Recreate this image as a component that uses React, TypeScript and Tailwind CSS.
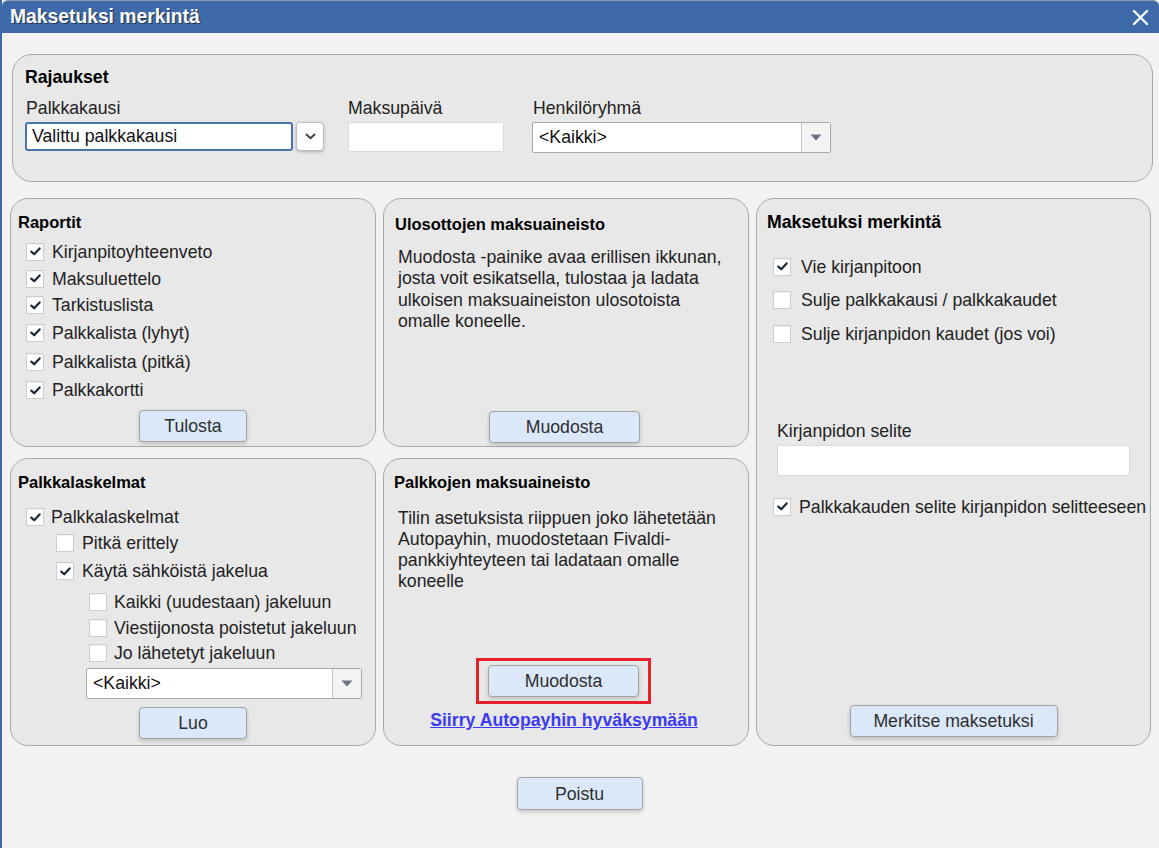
import React from "react";

function Check({ checked }: { checked?: boolean }) {
  return (
    <span className="flex h-[18px] w-[18px] shrink-0 items-center justify-center border border-[#cdcdcd] bg-white shadow-[inset_0_1px_1px_rgba(0,0,0,0.06)]">
      {checked && (
        <svg width="11" height="9" viewBox="0 0 11 9">
          <path d="M1.3 4.6 L4.2 7.3 L9.6 1.4" fill="none" stroke="#1f2a36" strokeWidth="2.2" strokeLinecap="round" strokeLinejoin="round" />
        </svg>
      )}
    </span>
  );
}

function CheckRow({ checked, label, className = "" }: { checked?: boolean; label: string; className?: string }) {
  return (
    <div className={`flex items-center ${className}`}>
      <Check checked={checked} />
      <span className="whitespace-nowrap text-[17.7px] leading-[20px] text-[#222]">{label}</span>
    </div>
  );
}

function Btn({ children, className = "" }: { children: React.ReactNode; className?: string }) {
  return (
    <button className={`h-[32px] rounded-[4px] border border-[#a3a3a3] bg-[#dbe8f9] text-[17.7px] leading-[20px] text-[#2f2f2f] shadow-[0_2px_4px_rgba(0,0,0,0.18)] ${className}`}>
      {children}
    </button>
  );
}

function Panel({
  title,
  children,
  className = "",
  titleClass = "text-[16.5px]",
}: {
  title: string;
  children?: React.ReactNode;
  className?: string;
  titleClass?: string;
}) {
  return (
    <div className={`flex flex-col rounded-[18px] border border-[#a9a9a9] bg-[#e8e8e8] ${className}`}>
      <div className={`font-bold leading-[20px] text-black ${titleClass}`}>{title}</div>
      {children}
    </div>
  );
}

function SelectBox({ value, className = "" }: { value: string; className?: string }) {
  return (
    <div className={`flex h-[31px] items-stretch rounded-[2px] border border-[#a9a9a9] bg-white ${className}`}>
      <div className="flex flex-1 items-center pl-[6px] text-[17.7px] text-[#111]">{value}</div>
      <div className="flex w-[29px] items-center justify-center border-l border-[#c4c4c4] bg-[#f3f3f3]">
        <svg width="12" height="7" viewBox="0 0 12 7">
          <path d="M0.5 0.5 H11.5 L6 6.5 Z" fill="#6c7483" />
        </svg>
      </div>
    </div>
  );
}

export default function App() {
  return (
    <div className="h-[848px] w-[1159px] overflow-hidden border-l-[2px] border-[#3e6aa9] bg-[#f2f2f2] font-['Liberation_Sans',Arial,sans-serif] text-[#222]">
      {/* title bar */}
      <div className="flex h-[33px] items-center justify-between rounded-t-[6px] border-t border-[#8d9bb0] bg-[#3e6aa9] pl-[8px] pr-[10px]">
        <span className="text-[19.3px] font-bold text-white [text-shadow:1px_1px_1px_rgba(0,0,0,0.55)]">Maksetuksi merkintä</span>
        <svg width="17" height="17" viewBox="0 0 17 17">
          <path d="M2 2 L15 15 M15 2 L2 15" stroke="white" strokeWidth="2.4" strokeLinecap="round" />
        </svg>
      </div>

      <div className="pl-[8px] pr-[6px] pt-[21px]">
        {/* filters */}
        <div className="ml-[2px] h-[128px] rounded-[20px] border border-[#a9a9a9] bg-[#e8e8e8] px-[12px] pt-[12px]">
          <div className="text-[17.7px] font-bold leading-[20px] text-black">Rajaukset</div>
          <div className="mt-[11px] flex">
            <div className="flex flex-col">
              <div className="pl-[1px] text-[17.7px] leading-[20px] text-[#222]">Palkkakausi</div>
              <div className="mt-[4px] flex gap-[3px]">
                <div className="flex h-[29px] w-[268px] items-center rounded-[3px] border-2 border-[#4a72ad] bg-white pl-[5px] text-[17.7px] text-[#111]">
                  Valittu palkkakausi
                </div>
                <div className="flex h-[29px] w-[28px] items-center justify-center rounded-[4px] border border-[#bdbdbd] bg-white shadow-[0_1px_3px_rgba(0,0,0,0.25)]">
                  <svg width="11" height="7" viewBox="0 0 11 7">
                    <path d="M1.5 1.5 L5.5 5.3 L9.5 1.5" fill="none" stroke="#444" strokeWidth="2" strokeLinecap="round" strokeLinejoin="round" />
                  </svg>
                </div>
              </div>
            </div>
            <div className="ml-[24px] flex flex-col">
              <div className="text-[17.7px] leading-[20px] text-[#222]">Maksupäivä</div>
              <div className="mt-[4px] h-[30px] w-[156px] rounded-[2px] border border-[#dadada] bg-white" />
            </div>
            <div className="ml-[28px] flex flex-col">
              <div className="pl-[1px] text-[17.7px] leading-[20px] text-[#222]">Henkilöryhmä</div>
              <SelectBox value="<Kaikki>" className="mt-[4px] w-[299px]" />
            </div>
          </div>
        </div>

        {/* panels */}
        <div className="mt-[16px] grid grid-cols-[366px_366px_395px] grid-rows-[249px_288px] gap-x-[7px] gap-y-[11px]">
          <Panel title="Raportit" className="pl-[7px] pt-[13px]">
            <div className="ml-[8px] mt-[6px] flex flex-col">
              <CheckRow checked label="Kirjanpitoyhteenveto" className="h-[27px] gap-[8px]" />
              <CheckRow checked label="Maksuluettelo" className="h-[27px] gap-[8px]" />
              <CheckRow checked label="Tarkistuslista" className="h-[26px] gap-[8px]" />
              <CheckRow checked label="Palkkalista (lyhyt)" className="h-[29px] gap-[8px]" />
              <CheckRow checked label="Palkkalista (pitkä)" className="h-[29px] gap-[8px]" />
              <CheckRow checked label="Palkkakortti" className="h-[28px] gap-[8px]" />
            </div>
            <div className="mt-[6px] flex justify-center pr-[7px]">
              <Btn className="w-[108px]">Tulosta</Btn>
            </div>
          </Panel>

          <Panel title="Ulosottojen maksuaineisto" className="pl-[11px] pt-[15px]">
            <p className="mt-[13px] pl-[3px] text-[17.7px] leading-[21.3px] text-[#222]">
              Muodosta -painike avaa erillisen ikkunan,
              <br />
              josta voit esikatsella, tulostaa ja ladata
              <br />
              ulkoisen maksuaineiston ulosotoista
              <br />
              omalle koneelle.
            </p>
            <div className="mt-[79px] flex justify-center pr-[14px]">
              <Btn className="w-[151px]">Muodosta</Btn>
            </div>
          </Panel>

          <Panel title="Maksetuksi merkintä" titleClass="text-[17.7px]" className="row-span-2 pl-[10px] pt-[13px]">
            <div className="ml-[6px] mt-[18px] flex flex-col">
              <CheckRow checked label="Vie kirjanpitoon" className="h-[33.5px] gap-[10px]" />
              <CheckRow label="Sulje palkkakausi / palkkakaudet" className="h-[33.5px] gap-[10px]" />
              <CheckRow label="Sulje kirjanpidon kaudet (jos voi)" className="h-[33.5px] gap-[10px]" />
            </div>
            <div className="ml-[10px] mt-[70px] text-[17.7px] leading-[20px] text-[#222]">Kirjanpidon selite</div>
            <div className="ml-[10px] mt-[4px] h-[31px] w-[353px] rounded-[2px] border border-[#dadada] bg-white" />
            <CheckRow checked label="Palkkakauden selite kirjanpidon selitteeseen" className="ml-[6px] mt-[21px] gap-[8px]" />
            <div className="mt-auto mb-[8px] flex justify-center pr-[10px]">
              <Btn className="w-[208px]">Merkitse maksetuksi</Btn>
            </div>
          </Panel>

          <Panel title="Palkkalaskelmat" className="pl-[7px] pt-[13px]">
            <div className="ml-[8px] mt-[12px] flex flex-col">
              <CheckRow checked label="Palkkalaskelmat" className="h-[26px] gap-[7px]" />
              <div className="ml-[30px] flex flex-col">
                <CheckRow label="Pitkä erittely" className="h-[26px] gap-[8px]" />
                <CheckRow checked label="Käytä sähköistä jakelua" className="h-[30px] gap-[8px]" />
                <div className="ml-[33px] mt-[3px] flex flex-col">
                  <CheckRow label="Kaikki (uudestaan) jakeluun" className="h-[26px] gap-[7px]" />
                  <CheckRow label="Viestijonosta poistetut jakeluun" className="h-[25px] gap-[7px]" />
                  <CheckRow label="Jo lähetetyt jakeluun" className="h-[26px] gap-[7px]" />
                </div>
              </div>
            </div>
            <SelectBox value="<Kaikki>" className="ml-[68px] mt-[2px] w-[276px]" />
            <div className="mt-[8px] flex justify-center pr-[7px]">
              <Btn className="w-[108px]">Luo</Btn>
            </div>
          </Panel>

          <Panel title="Palkkojen maksuaineisto" className="pl-[10px] pt-[13px]">
            <p className="mt-[16px] pl-[4px] text-[17.7px] leading-[21px] text-[#222]">
              Tilin asetuksista riippuen joko lähetetään
              <br />
              Autopayhin, muodostetaan Fivaldi-
              <br />
              pankkiyhteyteen tai ladataan omalle
              <br />
              koneelle
            </p>
            <div className="mt-[66px] flex justify-center pr-[15px]">
              <div className="flex h-[46px] w-[175px] items-center justify-center border-[3px] border-[#e5202a]">
                <Btn className="w-[151px]">Muodosta</Btn>
              </div>
            </div>
            <div className="mt-[6px] flex justify-center pr-[14px]">
              <a className="text-[17.7px] font-bold leading-[20px] text-[#3b3bf5] underline">Siirry Autopayhin hyväksymään</a>
            </div>
          </Panel>
        </div>

        <div className="mt-[31px] flex justify-center pr-[4px]">
          <Btn className="h-[33px] w-[126px]">Poistu</Btn>
        </div>
      </div>
    </div>
  );
}
